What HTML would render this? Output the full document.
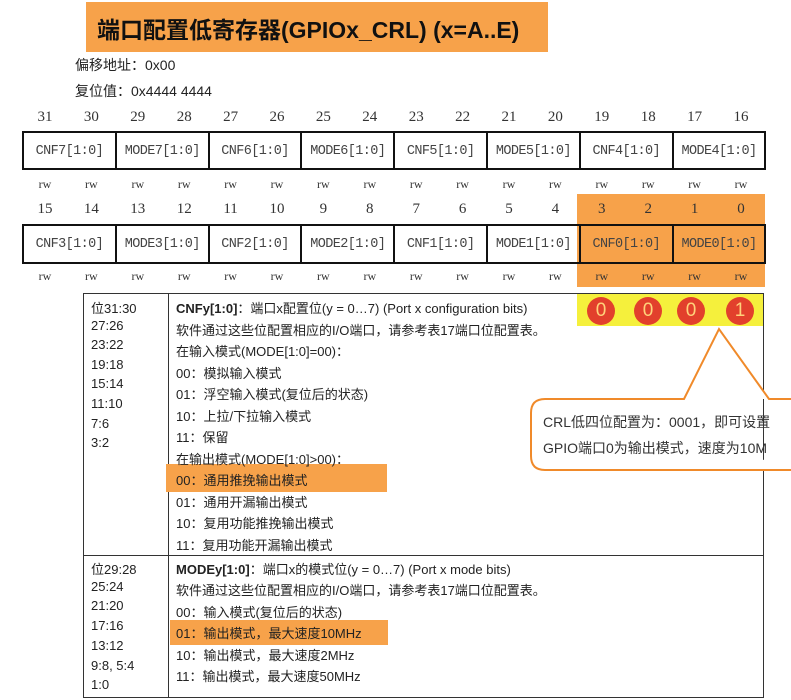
<!DOCTYPE html>
<html><head><meta charset="utf-8"><style>
body{margin:0;width:791px;height:700px;background:#fff;position:relative;overflow:hidden;font-family:"Liberation Sans","Noto Sans CJK SC",sans-serif;color:#222}
.a{position:absolute;white-space:nowrap}
.num{position:absolute;width:46px;text-align:center;font-family:"Liberation Serif","Noto Serif CJK SC",serif;font-size:15px;color:#333}
.rw{position:absolute;width:46px;text-align:center;font-family:"Liberation Serif",serif;font-size:12px;color:#333}
.cell{position:absolute;box-sizing:border-box;border:2px solid #111;text-align:center;font-family:"Liberation Mono","DejaVu Sans Mono",monospace;font-size:13.5px;color:#444;letter-spacing:-0.6px}
.t{position:absolute;font-size:13px;white-space:nowrap;color:#222}
.c{position:absolute;width:28px;height:28px;border-radius:50%;background:#e2402c;color:#ffd27a;font-size:19px;text-align:center;line-height:28px;top:297px}
</style></head><body>
<div class="a" style="left:86px;top:2px;width:462px;height:50px;background:#f7a24a"></div>
<div class="a" style="left:97px;top:11px;font-size:23px;font-weight:bold;color:#111;font-family:'Liberation Sans','Noto Sans CJK SC',sans-serif">端口配置低寄存器(GPIOx_CRL) (x=A..E)</div>
<div class="a" style="left:75px;top:55px;font-size:14px">偏移地址：0x00</div>
<div class="a" style="left:75px;top:81px;font-size:14px">复位值：0x4444 4444</div>
<div class="a" style="left:577px;top:194px;width:188px;height:93px;background:#f7a24a"></div>
<div id="g"></div>
<div class="a" style="left:83px;top:293px;width:681px;height:405px;border:1px solid #333;box-sizing:border-box"></div>
<div class="a" style="left:168px;top:293px;width:1px;height:405px;background:#333"></div>
<div class="a" style="left:83px;top:555px;width:681px;height:1px;background:#333"></div>
<div class="a" style="left:577px;top:294px;width:186px;height:32px;background:#f5f03c"></div>
<div class="a" style="left:166px;top:464px;width:221px;height:28px;background:#f7a24a"></div>
<div class="a" style="left:170px;top:620px;width:218px;height:25px;background:#f7a24a"></div>
<div class="c" style="left:587px">0</div><div class="c" style="left:634px">0</div><div class="c" style="left:677px">0</div><div class="c" style="left:726px">1</div>
<div id="txt"></div>
<svg class="a" style="left:0;top:0" width="791" height="700"><path d="M545 399 H684 L719 329 L769 399 H800 M800 470 H545 Q531 470 531 456 V413 Q531 399 545 399" fill="#fff" stroke="#f08a2a" stroke-width="2"/></svg>
<div class="a" style="left:543px;top:412px;font-size:14px;color:#333">CRL低四位配置为：0001，即可设置</div>
<div class="a" style="left:543px;top:438px;font-size:14px;color:#333">GPIO端口0为输出模式，速度为10M</div>
<script>
var g=document.getElementById('g'),h='',x0=22,w=46.4;
var n1=['CNF7','MODE7','CNF6','MODE6','CNF5','MODE5','CNF4','MODE4'],n2=['CNF3','MODE3','CNF2','MODE2','CNF1','MODE1','CNF0','MODE0'];
for(var i=0;i<16;i++){var l=x0+i*w;
h+='<div class="num" style="left:'+l+'px;top:109px">'+(31-i)+'</div>';
h+='<div class="num" style="left:'+l+'px;top:201px">'+(15-i)+'</div>';
h+='<div class="rw" style="left:'+l+'px;top:177px">rw</div>';
h+='<div class="rw" style="left:'+l+'px;top:269px">rw</div>';}
for(var j=0;j<8;j++){var l=x0+j*2*w;
h+='<div class="cell" style="left:'+l+'px;top:131px;width:'+(2*w+2)+'px;height:39px;line-height:37px">'+n1[j]+'[1:0]</div>';
h+='<div class="cell" style="left:'+l+'px;top:224px;width:'+(2*w+2)+'px;height:40px;line-height:38px">'+n2[j]+'[1:0]</div>';}
g.innerHTML=h;
var L1=['位31:30','27:26','23:22','19:18','15:14','11:10','7:6','3:2'],
R1=['<b>CNFy[1:0]</b>：端口x配置位(y = 0…7) (Port x configuration bits)','软件通过这些位配置相应的I/O端口，请参考表17端口位配置表。','在输入模式(MODE[1:0]=00)：','00：模拟输入模式','01：浮空输入模式(复位后的状态)','10：上拉/下拉输入模式','11：保留','在输出模式(MODE[1:0]>00)：','00：通用推挽输出模式','01：通用开漏输出模式','10：复用功能推挽输出模式','11：复用功能开漏输出模式'],
L2=['位29:28','25:24','21:20','17:16','13:12','9:8, 5:4','1:0'],
R2=['<b>MODEy[1:0]</b>：端口x的模式位(y = 0…7) (Port x mode bits)','软件通过这些位配置相应的I/O端口，请参考表17端口位配置表。','00：输入模式(复位后的状态)','01：输出模式，最大速度10MHz','10：输出模式，最大速度2MHz','11：输出模式，最大速度50MHz'];
var s='';
L1.forEach(function(t,i){s+='<div class="t" style="left:91px;top:'+(298+i*19.6)+'px">'+t+'</div>'});
R1.forEach(function(t,i){s+='<div class="t" style="left:176px;top:'+(298+i*21.5)+'px">'+t+'</div>'});
L2.forEach(function(t,i){s+='<div class="t" style="left:91px;top:'+(559+i*19.7)+'px">'+t+'</div>'});
R2.forEach(function(t,i){s+='<div class="t" style="left:176px;top:'+(559+i*21.4)+'px">'+t+'</div>'});
document.getElementById('txt').innerHTML=s;
</script>
</body></html>
